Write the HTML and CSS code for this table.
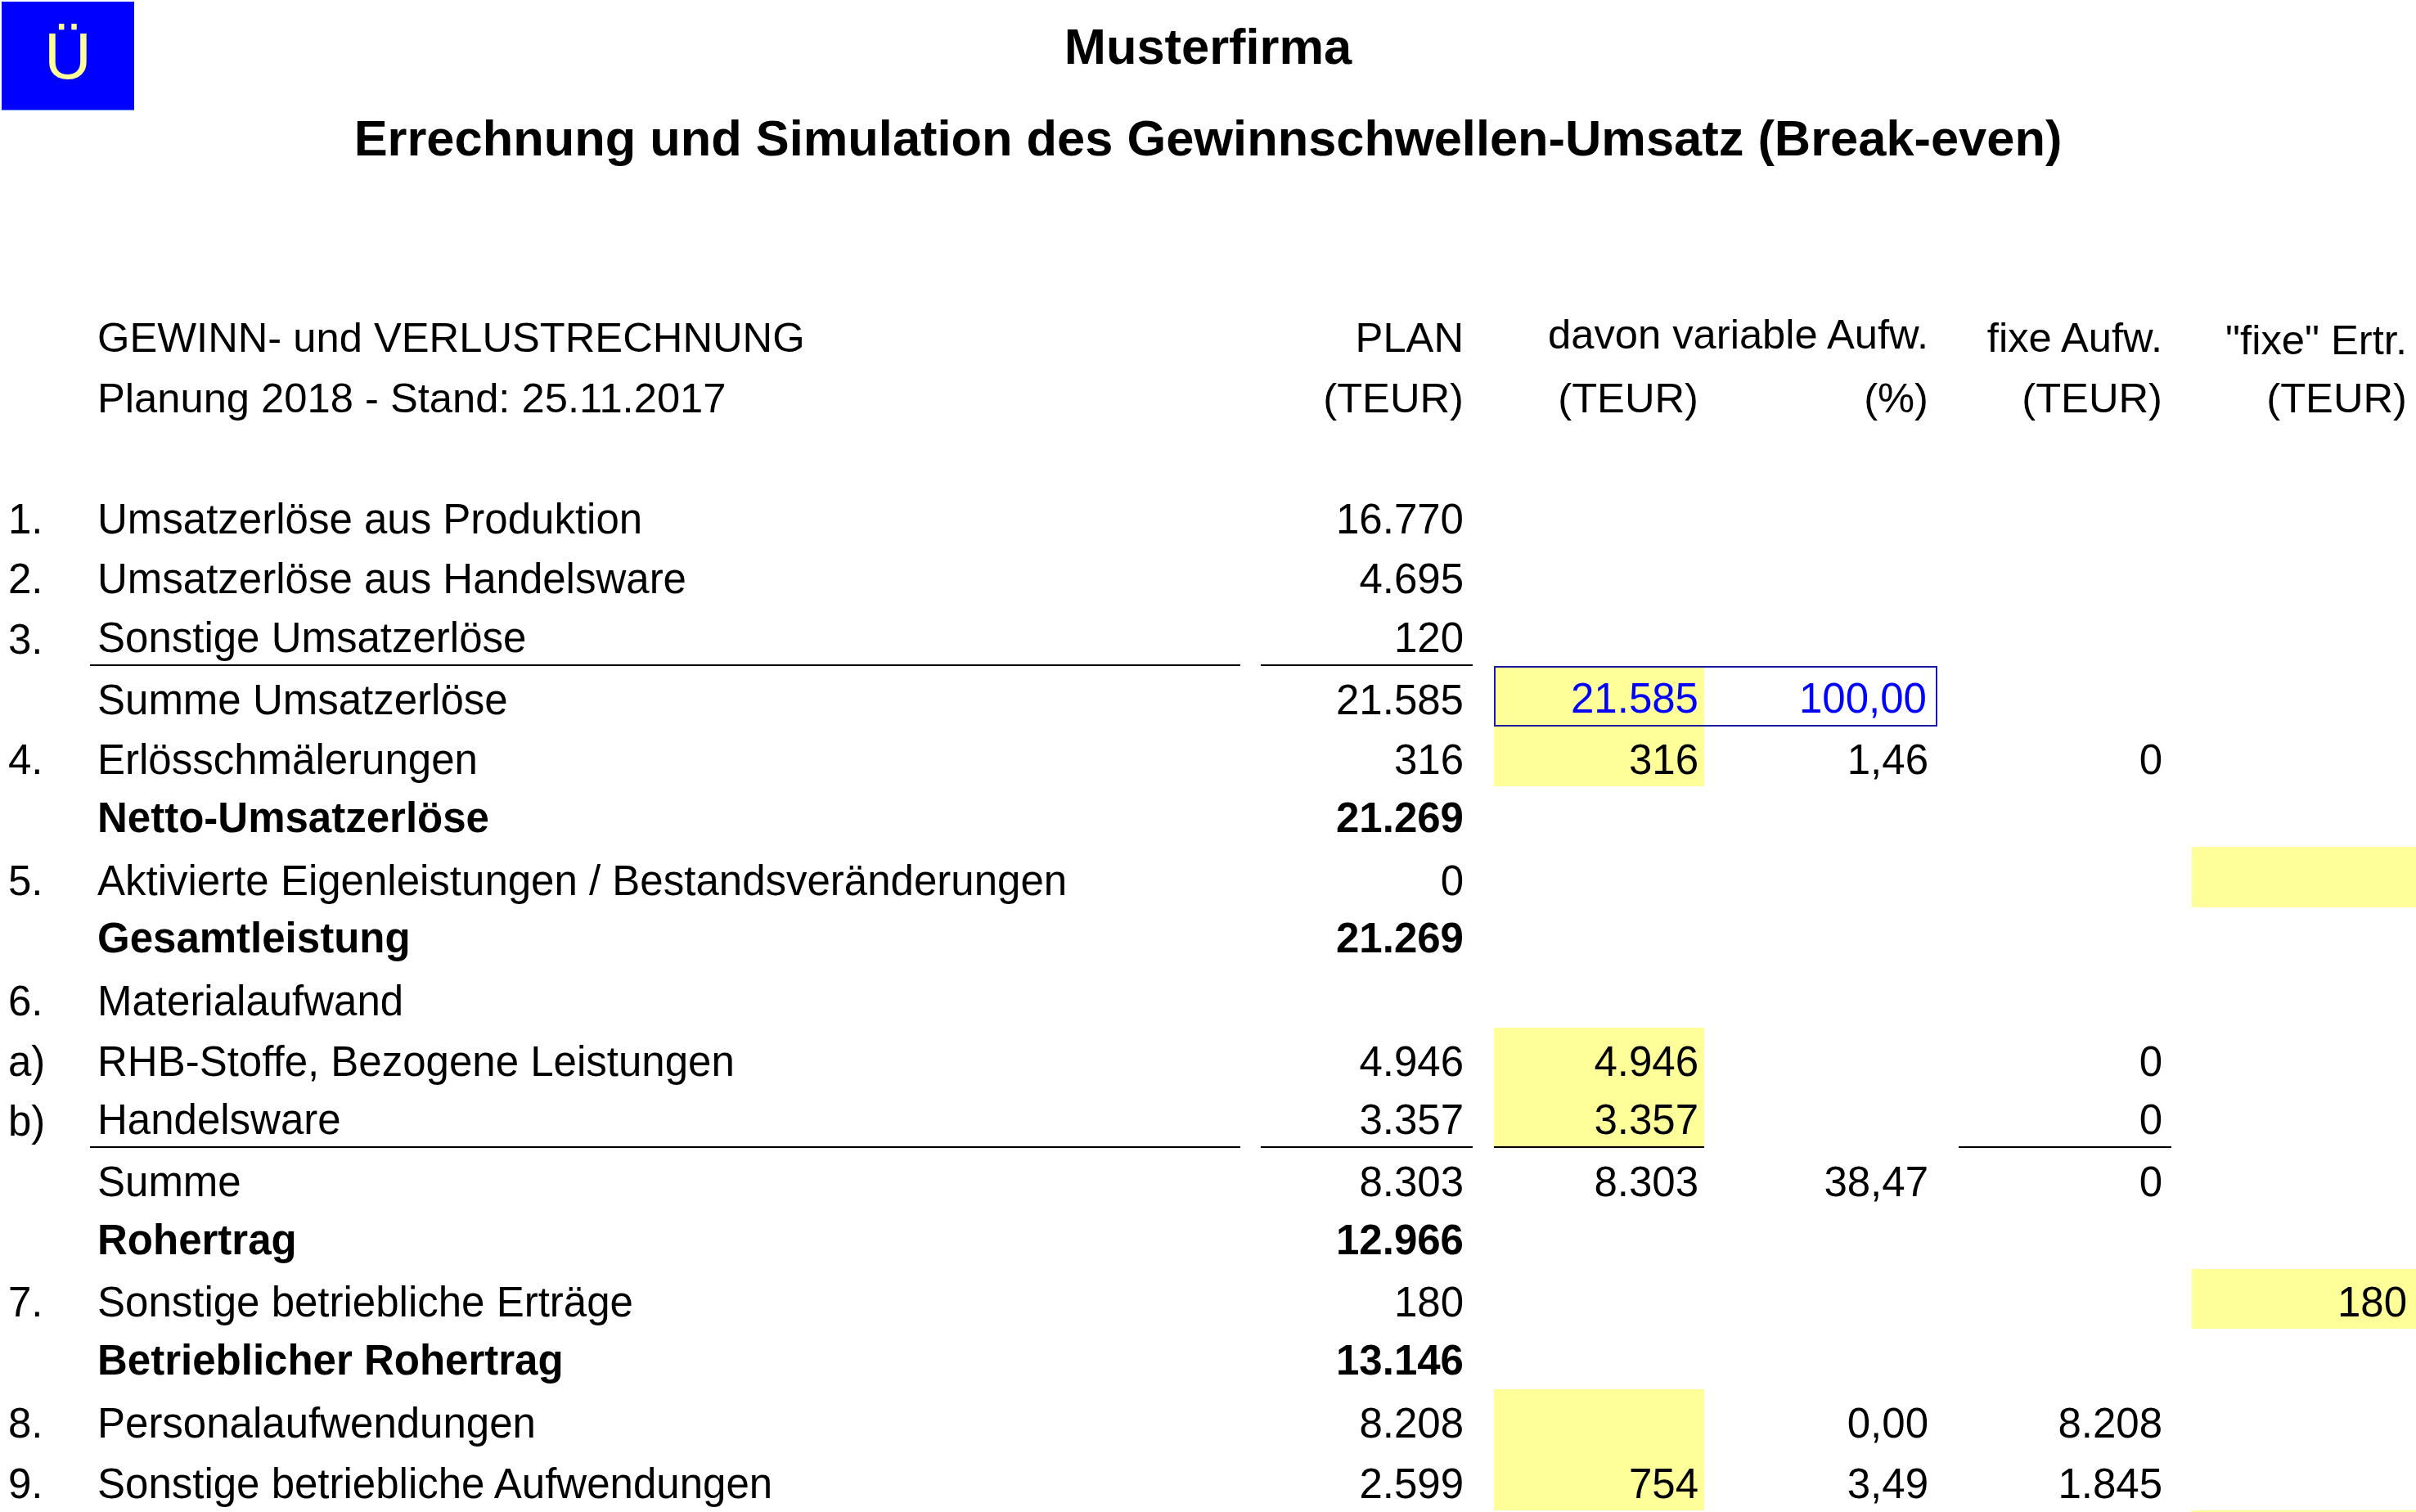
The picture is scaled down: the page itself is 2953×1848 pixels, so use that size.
FILE: index.html
```html
<!DOCTYPE html>
<html lang="de">
<head>
<meta charset="utf-8">
<title>Musterfirma – Break-even</title>
<link rel="stylesheet" href="styles.css">
</head>
<body>
<div class="top">
  <div class="logo"><span>Ü</span></div>
  <div class="titles">
    <div class="t1">Musterfirma</div>
    <div class="t2">Errechnung und Simulation des Gewinnschwellen-Umsatz (Break-even)</div>
  </div>
  <div></div>
</div>

<div class="sheet">
  <div class="row head">
    <div class="c cB">GEWINN- und VERLUSTRECHNUNG</div>
    <div class="c cD r">PLAN</div>
    <div class="c cFG r up4">davon variable Aufw.</div>
    <div class="c cH r">fixe Aufw.</div>
    <div class="c cJ r dn3">"fixe" Ertr.</div>
  </div>
  <div class="row head">
    <div class="c cB">Planung 2018 - Stand: 25.11.2017</div>
    <div class="c cD r">(TEUR)</div>
    <div class="c cF r">(TEUR)</div>
    <div class="c cG r">(%)</div>
    <div class="c cH r">(TEUR)</div>
    <div class="c cJ r">(TEUR)</div>
  </div>
  <div class="row"></div>

  <div class="row">
    <div class="c cA">1.</div>
    <div class="c cB">Umsatzerlöse aus Produktion</div>
    <div class="c cD r">16.770</div>
  </div>
  <div class="row">
    <div class="c cA">2.</div>
    <div class="c cB">Umsatzerlöse aus Handelsware</div>
    <div class="c cD r">4.695</div>
  </div>
  <div class="row">
    <div class="c cA">3.</div>
    <div class="c cB ul">Sonstige Umsatzerlöse</div>
    <div class="c cD r ul">120</div>
  </div>
  <div class="row">
    <div class="c cB">Summe Umsatzerlöse</div>
    <div class="c cD r">21.585</div>
    <div class="c cF r yel blue boxl">21.585</div>
    <div class="c cG r blue boxr">100,00</div>
  </div>
  <div class="row">
    <div class="c cA">4.</div>
    <div class="c cB">Erlösschmälerungen</div>
    <div class="c cD r">316</div>
    <div class="c cF r yel">316</div>
    <div class="c cG r">1,46</div>
    <div class="c cH r">0</div>
  </div>
  <div class="row bold">
    <div class="c cB">Netto-Umsatzerlöse</div>
    <div class="c cD r">21.269</div>
  </div>
  <div class="row">
    <div class="c cA">5.</div>
    <div class="c cB">Aktivierte Eigenleistungen / Bestandsveränderungen</div>
    <div class="c cD r">0</div>
    <div class="c cJ r yel"></div>
  </div>
  <div class="row bold">
    <div class="c cB">Gesamtleistung</div>
    <div class="c cD r">21.269</div>
  </div>
  <div class="row">
    <div class="c cA">6.</div>
    <div class="c cB">Materialaufwand</div>
  </div>
  <div class="row">
    <div class="c cA">a)</div>
    <div class="c cB">RHB-Stoffe, Bezogene Leistungen</div>
    <div class="c cD r">4.946</div>
    <div class="c cF r yel">4.946</div>
    <div class="c cH r">0</div>
  </div>
  <div class="row">
    <div class="c cA">b)</div>
    <div class="c cB ul">Handelsware</div>
    <div class="c cD r ul">3.357</div>
    <div class="c cF r yel ul">3.357</div>
    <div class="c cH r ul">0</div>
  </div>
  <div class="row">
    <div class="c cB">Summe</div>
    <div class="c cD r">8.303</div>
    <div class="c cF r">8.303</div>
    <div class="c cG r">38,47</div>
    <div class="c cH r">0</div>
  </div>
  <div class="row bold">
    <div class="c cB">Rohertrag</div>
    <div class="c cD r">12.966</div>
  </div>
  <div class="row">
    <div class="c cA">7.</div>
    <div class="c cB">Sonstige betriebliche Erträge</div>
    <div class="c cD r">180</div>
    <div class="c cJ r yel">180</div>
  </div>
  <div class="row bold">
    <div class="c cB">Betrieblicher Rohertrag</div>
    <div class="c cD r">13.146</div>
  </div>
  <div class="row">
    <div class="c cA">8.</div>
    <div class="c cB">Personalaufwendungen</div>
    <div class="c cD r">8.208</div>
    <div class="c cF r yel"></div>
    <div class="c cG r">0,00</div>
    <div class="c cH r">8.208</div>
  </div>
  <div class="row">
    <div class="c cA">9.</div>
    <div class="c cB">Sonstige betriebliche Aufwendungen</div>
    <div class="c cD r">2.599</div>
    <div class="c cF r yel">754</div>
    <div class="c cG r">3,49</div>
    <div class="c cH r">1.845</div>
  </div>
  <div class="row">
    <div class="c cJ r yel"></div>
  </div>
</div>
</body>
</html>
```

FILE: styles.css
```css
html, body {
  margin: 0;
  padding: 0;
  background: #ffffff;
}

body {
  width: 2953px;
  height: 1848px;
  overflow: hidden;
  font-family: "Liberation Sans", Arial, sans-serif;
  color: #000000;
}

/* ---------- title area ---------- */
.top {
  display: grid;
  grid-template-columns: 166px 1fr 166px;
  height: 371.8px;
}

.logo {
  margin: 2px 0 0 2px;
  width: 162px;
  height: 132px;
  background: #0000ff;
  border-bottom: 1px solid #5c8cff;
  display: flex;
  align-items: center;
  justify-content: center;
}

.logo span {
  font-size: 80px;
  line-height: 80px;
  color: #ffff99;
  padding-top: 2px;
}

.titles {
  text-align: center;
  font-weight: bold;
  font-size: 61.4px;
  line-height: 61px;
  white-space: nowrap;
}

.t1 {
  margin-top: 26px;
}

.t2 {
  margin-top: 51px;
}

/* ---------- sheet ---------- */
.sheet {
  display: flex;
  flex-direction: column;
}

.row {
  display: grid;
  grid-template-columns: 110px 1406px 25px 259px 26px 257px 285px 26px 260px 25px 274px;
  height: 73.7px;
  font-size: 51px;
}

.row.head {
  font-size: 50.7px;
}

.c {
  display: flex;
  align-items: flex-end;
  line-height: 51px;
  padding-bottom: 7px;
  white-space: nowrap;
  box-sizing: border-box;
  height: 100%;
}

.bold .c {
  font-weight: bold;
  padding-bottom: 10px;
}

.r {
  justify-content: flex-end;
  padding-right: 11px;
}

.cA { grid-column: 1; padding-left: 10px; }
.cB { grid-column: 2; padding-left: 9px; }
.cD { grid-column: 4; }
.cF { grid-column: 6; padding-right: 7px; }
.cG { grid-column: 7; }
.cFG { grid-column: 6 / span 2; }
.cH { grid-column: 9; }
.cJ { grid-column: 11; }

.up4 { padding-bottom: 11px; }
.dn3 { padding-bottom: 4px; }

.yel {
  background: #ffff99;
}

.blue {
  color: #0000ff;
}

.ul {
  border-bottom: 2px solid #000000;
}

.boxl {
  border: 2px solid #1c1ca0;
  border-right: none;
}

.boxr {
  border: 2px solid #1c1ca0;
  border-left: none;
}
```
